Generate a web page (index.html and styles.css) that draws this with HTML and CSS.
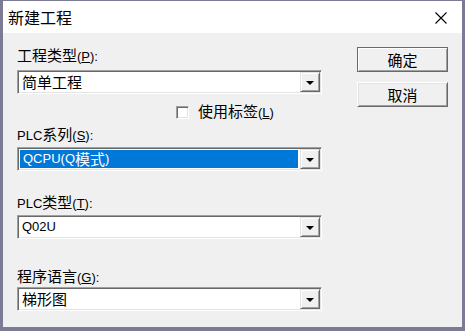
FILE: index.html
```html
<!DOCTYPE html>
<html>
<head>
<meta charset="utf-8">
<link rel="stylesheet" href="styles.css">
</head>
<body>
<div class="win">
  <div class="titlebar">
    <span class="title">新建工程</span>
    <svg class="close" width="12" height="12" viewBox="0 0 12 12"><path d="M0.5 0.5 L11.5 11.5 M11.5 0.5 L0.5 11.5" stroke="#000" stroke-width="1.1" fill="none"/></svg>
  </div>
  <div class="client">
    <div class="form">
      <div class="label l1">工程类型<span class="acc">(<u>P</u>):</span></div>
      <div class="combo c1">
        <div class="field">简单工程</div>
        <div class="dd"><i class="arrow"></i></div>
      </div>
      <div class="check"><span class="box"></span><span>使用标签<span class="acc">(<u>L</u>)</span></span></div>
      <div class="label l2"><span class="lat">PLC</span>系列<span class="acc">(<u>S</u>):</span></div>
      <div class="combo c2">
        <div class="field"><span class="sel"><span class="lat">QCPU(Q</span>模式<span class="lat">)</span></span></div>
        <div class="dd"><i class="arrow"></i></div>
      </div>
      <div class="label l3"><span class="lat">PLC</span>类型<span class="acc">(<u>T</u>):</span></div>
      <div class="combo c3">
        <div class="field"><span class="lat">Q02U</span></div>
        <div class="dd"><i class="arrow"></i></div>
      </div>
      <div class="label l4">程序语言<span class="acc">(<u>G</u>):</span></div>
      <div class="combo c4">
        <div class="field">梯形图</div>
        <div class="dd"><i class="arrow"></i></div>
      </div>
    </div>
    <div class="buttons">
      <div class="btn default">确定</div>
      <div class="btn">取消</div>
    </div>
  </div>
</div>
</body>
</html>
```

FILE: styles.css
```css
html, body {
  margin: 0;
  padding: 0;
  background: #7c7b95;
}
.win {
  width: 465px;
  height: 331px;
  box-sizing: border-box;
  border-style: solid;
  border-color: #7c7b95;
  border-width: 1px 3px 4px 3px;
  display: flex;
  flex-direction: column;
  font-family: "Noto Sans CJK SC", sans-serif;
  font-size: 15px;
  color: #000;
}
.titlebar {
  height: 32px;
  background: #fff;
  display: flex;
  align-items: center;
  justify-content: space-between;
  padding: 0 15px 0 5px;
}
.title {
  font-size: 16px;
  line-height: 20px;
}
.close {
  display: block;
  margin-top: 2px;
}
.client {
  flex: 1;
  background: #f0f0f0;
  display: flex;
  padding-left: 14px;
}
.form {
  width: 305px;
  display: flex;
  flex-direction: column;
  padding-top: 12px;
}
.label {
  height: 20px;
  line-height: 20px;
  white-space: nowrap;
}
.lat {
  font-family: "Liberation Sans", Arial, sans-serif;
  font-size: 13px;
}
.acc {
  font-family: "Liberation Sans", Arial, sans-serif;
  font-size: 13px;
}
.acc u {
  text-underline-offset: 1px;
}
.l2 { margin-top: 2px; }
.l3 { margin-top: 21px; }
.l4 { margin-top: 27px; }
.combo {
  height: 24px;
  box-sizing: border-box;
  border: 1px solid;
  border-color: #a0a0a0 #ffffff #ffffff #a0a0a0;
  display: flex;
}
.combo > .field, .combo > .dd { }
.combo {
  box-shadow: inset 1px 1px 0 #696969, inset -1px -1px 0 #e3e3e3;
  padding: 1px;
  background: #fff;
}
.c1 { margin-top: 5px; }
.c2 { margin-top: 3px; }
.c3 { margin-top: 3px; }
.c4 { margin-top: 1px; }
.field {
  flex: 1;
  display: flex;
  align-items: center;
  padding-left: 3px;
  line-height: 20px;
  white-space: nowrap;
  overflow: hidden;
}
.c2 .field {
  padding: 1px 2px 1px 1px;
}
.sel {
  flex: 1;
  align-self: stretch;
  background: #0078d7;
  color: #fff;
  padding-left: 3px;
  display: flex;
  align-items: center;
  line-height: 18px;
}
.dd {
  width: 20px;
  box-sizing: border-box;
  background: #f0f0f0;
  border-style: solid;
  border-width: 1px;
  border-color: #e3e3e3 #696969 #696969 #e3e3e3;
  box-shadow: inset 1px 1px 0 #fff, inset -1px -1px 0 #a0a0a0;
  display: flex;
  align-items: center;
  justify-content: center;
}
.arrow {
  width: 0;
  height: 0;
  border-left: 4px solid transparent;
  border-right: 4px solid transparent;
  border-top: 4px solid #000;
  margin-top: 1px;
}
.check {
  margin-top: 8px;
  height: 20px;
  display: flex;
  align-items: center;
  padding-left: 159px;
  line-height: 20px;
  white-space: nowrap;
}
.box {
  width: 13px;
  height: 13px;
  box-sizing: border-box;
  background: #fff;
  border: 1px solid;
  border-color: #a0a0a0 #fff #fff #a0a0a0;
  box-shadow: inset 1px 1px 0 #696969, inset -1px -1px 0 #e3e3e3;
  margin-right: 9px;
}
.buttons {
  margin-left: 35px;
  padding-top: 14px;
  display: flex;
  flex-direction: column;
  gap: 10px;
}
.btn {
  width: 91px;
  height: 25px;
  box-sizing: border-box;
  background: #f0f0f0;
  border: 1px solid;
  border-color: #fff #696969 #696969 #fff;
  box-shadow: inset 1px 1px 0 #e3e3e3, inset -1px -1px 0 #a0a0a0;
  display: flex;
  align-items: center;
  justify-content: center;
  line-height: 20px;
}
.btn.default {
  border-color: #696969;
  box-shadow: inset 1px 1px 0 #fff, inset -1px -1px 0 #a0a0a0;
}
```
